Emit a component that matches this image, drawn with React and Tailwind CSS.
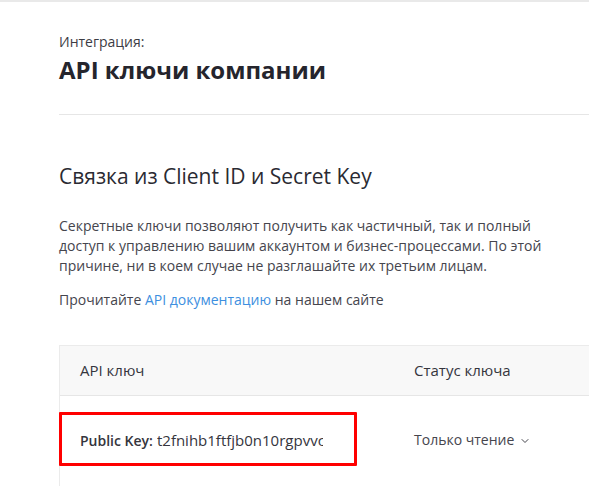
import { ChevronDown } from "lucide-react";

const App = () => {
  return (
    <div
      className="w-[589px] h-[486px] overflow-hidden bg-white"
      style={{ fontFamily: '"Open Sans", "Noto Sans", sans-serif' }}
    >
      <div className="h-[2px] bg-[#e9e9e9]" />

      <div className="pl-[59px] pt-[30px]">
        {/* Header */}
        <div className="text-[14px] leading-[20px] text-[#3c3c44]">Интеграция:</div>
        <h1 className="mt-[2px] text-[24px] leading-[32px] font-bold text-[#25252d]">
          API ключи компании
        </h1>

        <div className="mt-[28px] h-px bg-[#e6e6e6]" />

        {/* Section */}
        <h2 className="mt-[47px] text-[21px] leading-[28px] text-[#2a2a32]">
          Связка из Client ID и Secret Key
        </h2>

        <p className="mt-[26px] w-[500px] text-[14px] leading-[20px] text-[#45454d]">
          Секретные ключи позволяют получить как частичный, так и полный
          доступ к управлению вашим аккаунтом и бизнес-процессами. По этой
          причине, ни в коем случае не разглашайте их третьим лицам.
        </p>

        <p className="mt-[14px] text-[14px] leading-[20px] text-[#45454d]">
          Прочитайте <a className="text-[#3d8fe0]">API документацию</a> на нашем сайте
        </p>

        {/* Table */}
        <div className="mt-[35px] w-[700px] border border-[#ebebeb]">
          <div className="flex h-[50px] items-center bg-[#f8f8f8] border-b border-[#e6e6e6] text-[15px] text-[#35353d]">
            <div className="w-[334px] pl-[20px]">API ключ</div>
            <div className="pl-[20px]">Статус ключа</div>
          </div>
          <div className="relative flex h-[90px] items-start pt-[34px] text-[14px] leading-[20px] text-[#35353d]">
            <div className="w-[334px] pl-[20px] flex items-baseline">
              <span className="font-semibold">Public Key:</span>
              <span className="ml-[4px] w-[166px] overflow-hidden whitespace-nowrap text-[15px]">
                t2fnihb1ftfjb0n10rgpvvc
              </span>
            </div>
            <div className="pl-[20px] flex items-center gap-[5px] text-[#45454d]">
              Только чтение
              <ChevronDown size={12} strokeWidth={2} className="mt-[2px]" />
            </div>
            <div className="absolute left-[-1px] top-[16px] w-[298px] h-[54px] border-[3px] border-[#ff0000] rounded-[1px]" />
          </div>
        </div>
      </div>
    </div>
  );
};

export default App;
